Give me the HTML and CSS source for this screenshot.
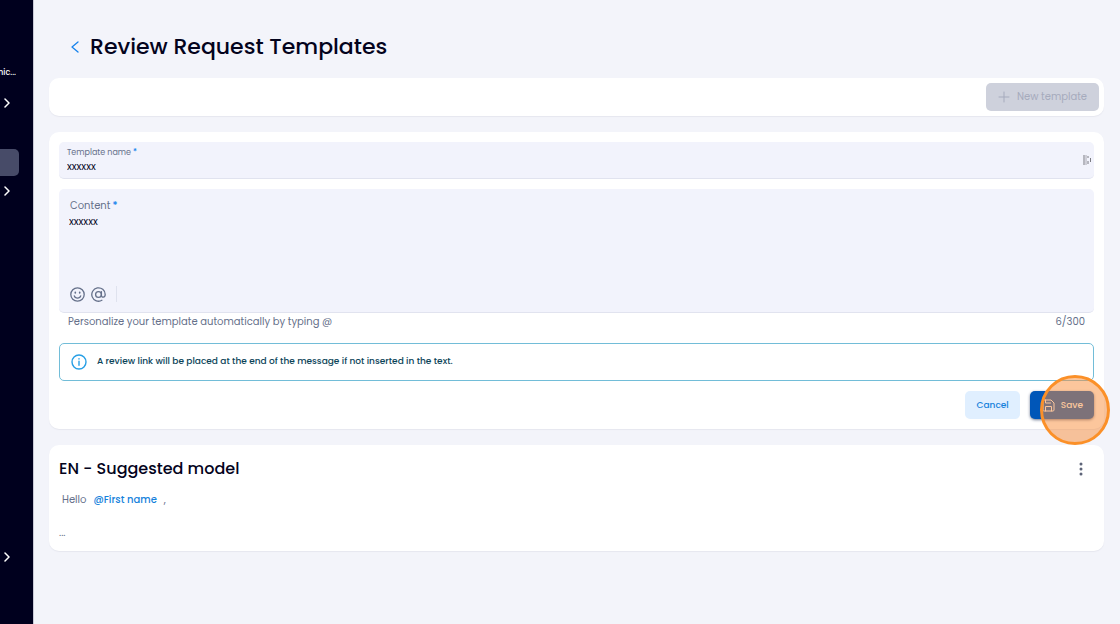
FILE: index.html
```html
<!DOCTYPE html>
<html lang="en">
<head>
<meta charset="utf-8">
<title>Review Request Templates</title>
<link rel="stylesheet" href="styles.css">
</head>
<body>
<div class="app">
  <nav class="sidebar" aria-label="Main">
    <div class="account"><span>mic...</span></div>
    <button class="nav-item" aria-label="Expand account"><svg width="6" height="10" viewBox="0 0 6 10"><path d="M1 1l4 4-4 4"/></svg></button>
    <a class="nav-active" href="#" aria-label="Current section"></a>
    <button class="nav-item" aria-label="Expand section"><svg width="6" height="10" viewBox="0 0 6 10"><path d="M1 1l4 4-4 4"/></svg></button>
    <button class="nav-item nav-last" aria-label="Expand profile"><svg width="6" height="10" viewBox="0 0 6 10"><path d="M1 1l4 4-4 4"/></svg></button>
  </nav>
  <main class="main">
    <header class="page-head">
      <a class="back" href="#" aria-label="Back"><svg width="8" height="12" viewBox="0 0 8 12"><path d="M7 1L1 6l6 5"/></svg></a>
      <h1>Review Request Templates</h1>
    </header>

    <section class="card toolbar">
      <button class="btn btn-new" disabled>
        <svg width="12" height="12" viewBox="0 0 12 12"><path d="M6 1v10M1 6h10"/></svg>
        New template
      </button>
    </section>

    <form class="card editor">
      <div class="field name-field">
        <div class="name-text">
          <label for="name">Template name<b>*</b></label>
          <input id="name" type="text" value="xxxxxx">
        </div>
        <svg class="fill-icon" width="8" height="10" viewBox="0 0 8 10"><path d="M1 0v10"/><path d="M3 0v10" stroke-opacity=".6"/><path d="M5 1v2M5 6v3M7.500 3v4"/></svg>
      </div>
      <div class="field content-field">
        <label for="content">Content<b>*</b></label>
        <textarea id="content">xxxxxx</textarea>
        <div class="tools">
          <button type="button" aria-label="Insert emoji"><svg width="15" height="15" viewBox="0 0 15 15"><circle cx="7.500" cy="7.500" r="6.700"/><path d="M4.300 8.800c.8 3 5.600 3 6.400 0"/><path class="dots" d="M5.300 5.400v.4M9.700 5.400v.4"/></svg></button>
          <button type="button" aria-label="Insert variable"><svg width="15" height="15" viewBox="0 0 15 15"><circle cx="7.500" cy="7.500" r="2.900"/><path d="M10.400 4.600v3.700c0 2.700 3.800 2.400 3.800-.8a6.700 6.700 0 1 0-3.300 5.800"/></svg></button>
          <span class="divider"></span>
        </div>
      </div>
      <div class="hint"><span>Personalize your template automatically by typing @</span><span>6/300</span></div>
      <div class="notice">
        <svg width="16" height="16" viewBox="0 0 16 16"><circle cx="8" cy="8" r="7"/><path d="M8 7.200v4M8 4.600v.4"/></svg>
        <p>A review link will be placed at the end of the message if not inserted in the text.</p>
      </div>
      <div class="actions">
        <button type="button" class="btn btn-cancel">Cancel</button>
        <div class="save-wrap">
          <button type="button" class="btn btn-save">
            <svg width="13" height="13" viewBox="0 0 13 13"><path d="M1 3V2c0-.6.4-1 1-1h7l3 3v7c0 .6-.4 1-1 1H2c-.6 0-1-.4-1-1z"/><path d="M3.500 12V7.500h6V12M3.500 1v3h5"/></svg>
            Save
          </button>
          <span class="click-mark"></span>
        </div>
      </div>
    </form>

    <article class="card model">
      <div class="model-head">
        <h2>EN - Suggested model</h2>
        <button class="more" aria-label="More options"><svg width="4" height="14" viewBox="0 0 4 14"><circle cx="2" cy="2" r="1.500"/><circle cx="2" cy="7" r="1.500"/><circle cx="2" cy="12" r="1.500"/></svg></button>
      </div>
      <p class="greeting"><span>Hello</span><span class="tag">@First name</span><span>,</span></p>
      <p class="rest">...</p>
    </article>
  </main>
</div>
</body>
</html>
```
FILE: styles.css
```css
* { box-sizing: border-box; }
body {
  margin: 0;
  background: #f3f4fa;
  color: #03031c;
  font-family: Poppins, Inter, "Open Sans", sans-serif;
  font-size: 10px;
  line-height: 16px;
}
button, input, textarea { font: inherit; color: inherit; border: 0; margin: 0; padding: 0; background: none; }
h1, h2, p { margin: 0; font-weight: 500; }
a { text-decoration: none; }
svg { display: block; flex: none; fill: none; stroke: currentColor; stroke-linecap: round; stroke-linejoin: round; }

.app { display: flex; min-height: 100vh; }
.sidebar {
  flex: none;
  width: 34px;
  display: flex;
  flex-direction: column;
  align-items: flex-start;
  padding: 65px 0 57px;
  background: #00001e;
  border-right: 1px solid #c9cad6;
  color: #fff;
}
.account { display: flex; justify-content: flex-end; width: 16px; overflow: hidden; font-size: 8px; font-weight: 500; }
.nav-item { display: flex; align-items: center; height: 20px; padding-left: 4px; margin-top: 12px; }
.nav-item svg { stroke-width: 1.5; }
.nav-active { width: 19px; height: 27px; margin: 36px 0 -7px; background: #474b68; border-radius: 0 5px 5px 0; }
.nav-last { margin-top: auto; }

.main { flex: 1; min-width: 0; padding: 28px 16px 0 15px; }
.page-head { display: flex; align-items: center; gap: 11px; height: 37px; padding-left: 22px; margin-bottom: 13px; }
.back { color: #1682ec; }
.back svg { stroke-width: 1.3; }
h1 { font-size: 22px; line-height: 37px; }

.card { background: #fff; border-radius: 10px; padding: 10px; margin-bottom: 16px; box-shadow: 0 1px 1px #e6e7ef; }
.toolbar { display: flex; justify-content: flex-end; padding: 5px; }
.btn { display: flex; align-items: center; height: 28px; border-radius: 5px; font-size: 9px; font-weight: 500; }
.btn-new { gap: 7px; padding: 0 12px; background: #ced1dc; color: #a6abbd; font-size: 10px; font-weight: 400; }

.field { background: #f2f3fc; border-radius: 5px; border-bottom: 1px solid #e1e3ef; color: #65708a; }
.field b { color: #1682ec; font-weight: 500; margin-left: 2px; }
.field input, .field textarea { display: block; width: 100%; color: #03031c; outline: 0; }
.name-field { display: flex; align-items: center; padding: 4px 3px 4px 8px; margin-bottom: 10px; }
.name-text { flex: 1; }
.name-text label { display: block; font-size: 8px; line-height: 13px; }
.name-text input { height: 15px; line-height: 15px; }
.fill-icon { color: #7b7b82; stroke-linecap: butt; }
.content-field { padding: 9px 10px 8px; }
.content-field label { display: block; padding-left: 1px; }
.content-field textarea { height: 70px; resize: none; }
.tools { display: flex; align-items: center; gap: 6px; height: 20px; padding-left: 1px; }
.tools svg { stroke-width: 1.3; }
.tools .dots { stroke-width: 1.7; }
.divider { width: 1px; height: 16px; margin-left: 4px; background: #dfe2ee; }
.hint { display: flex; justify-content: space-between; padding: 1px 9px 0; margin-bottom: 13px; color: #65708a; }
.notice { display: flex; align-items: flex-start; gap: 10px; padding: 9px 11px 10px; border: 1px solid #72bdd8; border-radius: 5px; font-size: 9px; color: #0c4459; }
.notice svg { color: #279fe5; stroke-width: 1.4; margin-top: 1px; }
.actions { display: flex; justify-content: flex-end; gap: 10px; margin-top: 10px; }
.btn-cancel { padding: 0 11px; background: #e0efff; color: #1682dc; }
.save-wrap { position: relative; }
.btn-save { gap: 6px; padding: 0 11px 0 12px; background: #0056b8; color: #fff; box-shadow: 0 1px 3px #6d7890; }
.click-mark {
  position: absolute;
  right: -16px;
  top: -16px;
  width: 70px;
  height: 70px;
  border: 3px solid #fb9028;
  border-radius: 50%;
  background: rgba(250, 142, 58, .5);
  pointer-events: none;
}

.model { margin-bottom: 0; }
.model-head { display: flex; align-items: center; justify-content: space-between; height: 27px; padding-right: 11px; }
h2 { font-size: 16px; line-height: 27px; }
.more { color: #5d6478; }
.more svg { fill: currentColor; stroke: none; }
.greeting { display: flex; gap: 7px; padding: 10px 3px 0; color: #65708a; font-weight: 400; }
.tag { color: #1682dc; font-weight: 500; }
.rest { margin-top: 17px; font-size: 9px; color: #65708a; }
```
